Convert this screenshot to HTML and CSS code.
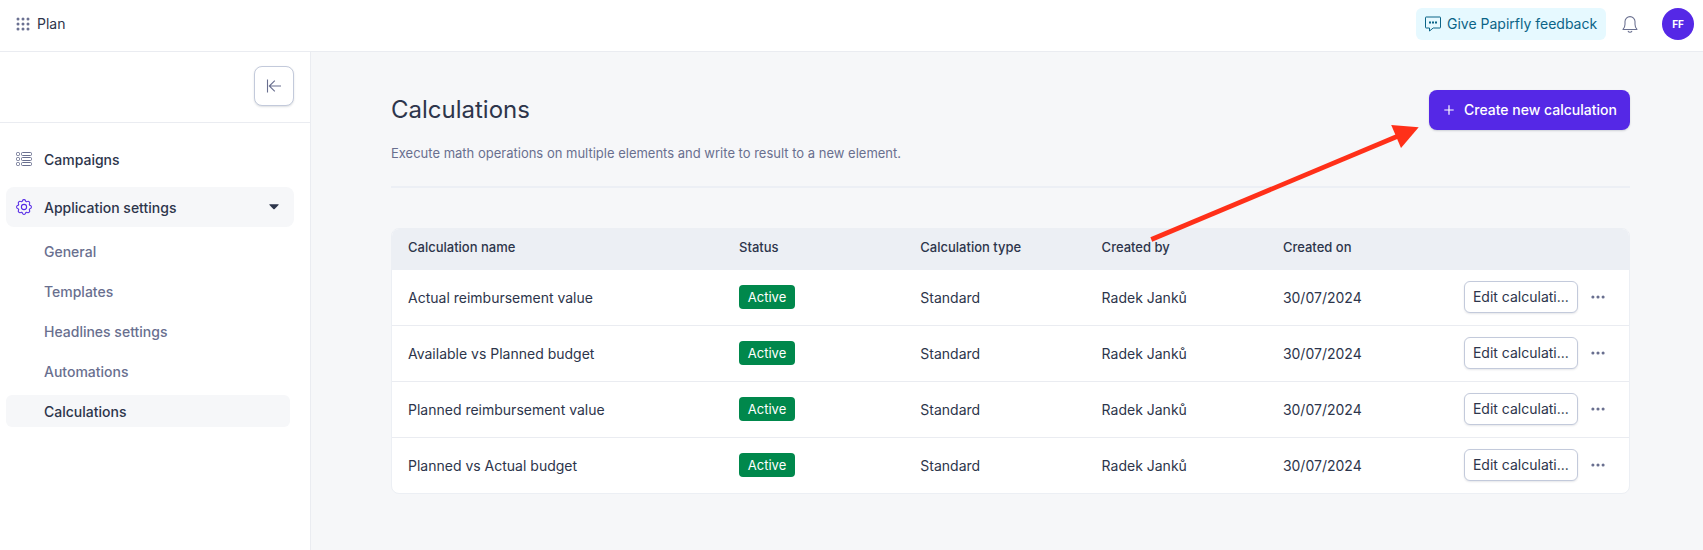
FILE: index.html
```html
<!DOCTYPE html>
<html lang="en">
<head>
<meta charset="utf-8">
<title>Plan – Calculations</title>
<link rel="stylesheet" href="styles.css">
</head>
<body>
<svg class="defs" width="0" height="0" aria-hidden="true">
  <symbol id="dots" viewBox="0 0 14 4"><circle cx="1.9" cy="2" r="1.55"/><circle cx="7" cy="2" r="1.55"/><circle cx="12.1" cy="2" r="1.55"/></symbol>
</svg>
<header class="topbar">
  <div class="brand">
    <svg class="grid-icon" width="14" height="14" viewBox="0 0 14 14"><circle cx="2" cy="2" r="1.5"/><circle cx="7" cy="2" r="1.5"/><circle cx="12" cy="2" r="1.5"/><circle cx="2" cy="7" r="1.5"/><circle cx="7" cy="7" r="1.5"/><circle cx="12" cy="7" r="1.5"/><circle cx="2" cy="12" r="1.5"/><circle cx="7" cy="12" r="1.5"/><circle cx="12" cy="12" r="1.5"/></svg>
    <span>Plan</span>
  </div>
  <div class="tools">
    <button class="feedback">
      <svg width="16" height="16" viewBox="0 0 16 16" fill="none" stroke="currentColor"><path d="M1 1h14a.5.5 0 0 1 .5.5v10a.5.5 0 0 1-.5.5H8.200L4.500 15v-3H1a.5.5 0 0 1-.5-.5v-10A.5.5 0 0 1 1 1z"/><path d="M4 6.500h2M7 6.500h2M10 6.500h2" stroke-width="2"/></svg>
      <span>Give Papirfly feedback</span>
    </button>
    <svg class="bell" width="16" height="17" viewBox="0 0 16 17" fill="none" stroke="currentColor" stroke-width="1.05" stroke-linejoin="round"><path d="M1 13.4c1.2-1.3 2-2.8 2-5.2V5.6a5 5 0 0 1 10 0v2.600c0 2.400.8 3.900 2 5.200z"/><path d="M6.200 15.200a1.900 1.500 0 0 0 3.600 0" stroke-linecap="round"/></svg>
    <span class="avatar">FF</span>
  </div>
</header>
<div class="body">
  <aside class="sidebar">
    <div class="side-head">
      <button class="collapse" aria-label="Collapse"><svg width="16" height="14" viewBox="0 0 16 14" fill="none" stroke="currentColor" stroke-width="1.1"><path d="M1.500.5v13M15 7H3.500M8.800 1.700 3.300 7l5.500 5.300"/></svg></button>
    </div>
    <nav class="nav">
      <a class="nav-item">
        <svg width="16" height="14" viewBox="0 0 16 14" fill="none" stroke="currentColor"><rect x=".5" y=".5" width="3" height="3" rx="1"/><rect x="5.500" y=".5" width="10" height="3" rx="1"/><rect x=".5" y="5.500" width="3" height="3" rx="1"/><rect x="5.500" y="5.500" width="10" height="3" rx="1"/><rect x=".5" y="10.500" width="3" height="3" rx="1"/><rect x="5.500" y="10.500" width="10" height="3" rx="1"/></svg>
        <span>Campaigns</span>
      </a>
      <a class="nav-item open">
        <svg class="gear" width="16" height="16" viewBox="0 0 16 16" fill="none" stroke="currentColor" stroke-width="1.100" stroke-linejoin="round"><path d="M6.520 1.540C6.900.3 9.100.3 9.480 1.540C9.750 2.700 10.600 3 11.520 2.380C12.700 1.800 14.200 3.300 13.620 4.480C13 5.400 13.300 6.250 14.460 6.520C15.700 6.900 15.700 9.100 14.460 9.480C13.300 9.750 13 10.600 13.620 11.520C14.200 12.700 12.700 14.200 11.520 13.620C10.600 13 9.750 13.300 9.480 14.460C9.100 15.700 6.900 15.700 6.520 14.460C6.250 13.300 5.400 13 4.480 13.620C3.300 14.200 1.800 12.700 2.380 11.520C3 10.600 2.700 9.750 1.540 9.480C.3 9.100.3 6.900 1.540 6.520C2.700 6.250 3 5.400 2.380 4.480C1.800 3.300 3.300 1.800 4.480 2.380C5.400 3 6.250 2.700 6.520 1.540z"/><circle cx="8" cy="8" r="2.600"/></svg>
        <span>Application settings</span>
        <svg class="caret" width="10" height="6" viewBox="0 0 10 6"><path d="M.8.300h8.400q.9 0 .3.700L5.700 4.900q-.7.600-1.400 0L.500 1Q-.1.300.8.300z"/></svg>
      </a>
      <div class="subnav">
        <a>General</a>
        <a>Templates</a>
        <a>Headlines settings</a>
        <a>Automations</a>
        <a class="current">Calculations</a>
      </div>
    </nav>
  </aside>
  <main class="main">
    <div class="title-row">
      <h1>Calculations</h1>
      <button class="create"><svg width="10" height="10" viewBox="0 0 10 10" stroke="currentColor" stroke-width="1.200"><path d="M5 .3v9.400M.3 5h9.400"/></svg><span>Create new calculation</span></button>
    </div>
    <p class="desc">Execute math operations on multiple elements and write to result to a new element.</p>
    <section class="table">
      <div class="row head"><span>Calculation name</span><span>Status</span><span>Calculation type</span><span>Created by</span><span>Created on</span><span></span></div>
      <div class="row"><span>Actual reimbursement value</span><span class="status"><b class="badge">Active</b></span><span>Standard</span><span>Radek Janků</span><span>30/07/2024</span><span class="actions"><button class="edit">Edit calculati...</button><svg class="more" width="14" height="4"><use href="#dots"/></svg></span></div>
      <div class="row"><span>Available vs Planned budget</span><span class="status"><b class="badge">Active</b></span><span>Standard</span><span>Radek Janků</span><span>30/07/2024</span><span class="actions"><button class="edit">Edit calculati...</button><svg class="more" width="14" height="4"><use href="#dots"/></svg></span></div>
      <div class="row"><span>Planned reimbursement value</span><span class="status"><b class="badge">Active</b></span><span>Standard</span><span>Radek Janků</span><span>30/07/2024</span><span class="actions"><button class="edit">Edit calculati...</button><svg class="more" width="14" height="4"><use href="#dots"/></svg></span></div>
      <div class="row"><span>Planned vs Actual budget</span><span class="status"><b class="badge">Active</b></span><span>Standard</span><span>Radek Janků</span><span>30/07/2024</span><span class="actions"><button class="edit">Edit calculati...</button><svg class="more" width="14" height="4"><use href="#dots"/></svg></span></div>
    </section>
  </main>
</div>
<svg class="arrow" width="270" height="120" viewBox="1150 123 270 120"><path d="M1151.300 239.500 1400 135.300" stroke="#ff3019" stroke-width="4.800"/><path d="M1418.700 127.200 1391.200 125 1401 148z" fill="#ff3019"/></svg>
</body>
</html>
```

FILE: styles.css
```css
* { box-sizing: border-box; }
body {
  margin: 0;
  height: 550px;
  display: flex;
  flex-direction: column;
  overflow: hidden;
  background: #f6f7f9;
  color: #2d354b;
  font: 400 14px/20px Inter, sans-serif;
}
button { font: inherit; letter-spacing: inherit; color: inherit; border: 0; margin: 0; padding: 0; }
svg { display: block; flex: none; }
.defs { position: absolute; }

.topbar {
  flex: none;
  height: 52px;
  display: flex;
  justify-content: space-between;
  padding: 0 9px 4px 16px;
  background: #fff;
  border-bottom: 1px solid #eaecf1;
}
.brand { display: flex; align-items: center; gap: 7px; }
.grid-icon { fill: #6b7192; }
.tools { display: flex; align-items: center; padding-top: 1px; }
.feedback {
  display: flex;
  align-items: center;
  gap: 6px;
  width: 190px;
  height: 32px;
  padding-left: 9px;
  border-radius: 6px;
  background: #e6f9ff;
  color: #0b6487;
  white-space: nowrap;
}
.bell { margin: 0 24px 0 16px; color: #696f8f; }
.avatar {
  width: 32px;
  height: 32px;
  border-radius: 50%;
  background: #5528e6;
  color: #fff;
  font-size: 10px;
  font-weight: 700;
  line-height: 33px;
  text-align: center;
}

.body { flex: 1; display: flex; }
.sidebar { width: 311px; flex: none; background: #fff; border-right: 1px solid #eaecf1; }
.side-head {
  height: 71px;
  display: flex;
  justify-content: flex-end;
  padding: 14px 16px 0;
  border-bottom: 1px solid #eaecf1;
}
.collapse {
  width: 40px;
  height: 40px;
  display: flex;
  align-items: center;
  justify-content: center;
  padding-bottom: 1px;
  border: 1px solid #c3cadb;
  border-radius: 8px;
  background: #fff;
  color: #696f8f;
  box-shadow: 0 1px 2px rgba(45, 53, 75, .16);
}
.nav { padding: 16px 16px 0 6px; display: flex; flex-direction: column; gap: 8px; }
.nav-item {
  height: 40px;
  display: flex;
  align-items: center;
  gap: 12px;
  padding: 0 15px 0 10px;
  border-radius: 8px;
  font-weight: 500;
  color: #2d354b;
}
.nav-item > svg { color: #696f8f; }
.nav-item > span { padding-top: 1px; }
.nav-item.open { background: #f6f7f9; }
.nav-item .gear { color: #5528e6; }
.nav-item .caret { margin-left: auto; fill: #2d354b; }
.subnav { display: flex; flex-direction: column; gap: 8px; width: 284px; }
.subnav a {
  height: 32px;
  padding-left: 38px;
  border-radius: 6px;
  line-height: 33px;
  font-weight: 500;
  color: #696f8f;
}
.subnav .current { background: #f6f7f9; color: #2d354b; }

.main { flex: 1; padding: 38px 73px 0 80px; }
.title-row { height: 40px; display: flex; justify-content: space-between; align-items: center; }
h1 { margin: 0; font-size: 24px; font-weight: 400; line-height: 32px; }
.create {
  display: flex;
  align-items: center;
  gap: 10px;
  width: 201px;
  height: 40px;
  padding-left: 15px;
  border-radius: 8px;
  background: #5528e6;
  color: #fff;
  font-weight: 500;
  white-space: nowrap;
  box-shadow: 0 1px 2px rgba(45, 53, 75, .2);
}
.desc {
  margin: 0 0 40px;
  height: 58px;
  padding-top: 13px;
  border-bottom: 2px solid #eceff5;
  font-size: 13px;
  color: #696f8f;
}
.table {
  height: 266px;
  border: 1px solid #eceff4;
  border-radius: 8px;
  overflow: hidden;
  background: #fff;
}
.row {
  height: 56px;
  display: grid;
  grid-template-columns: 331px 181.300px 181.300px 181.300px 181px 1fr;
  align-items: center;
  padding: 0 0 1px 16px;
  border-bottom: 1px solid #eaecf1;
}
.row > span { padding-top: 2px; white-space: nowrap; }
.row > .status, .row > .actions { padding-top: 0; }
.row:last-child { height: 55px; border-bottom: 0; }
.row.head {
  height: 41px;
  border: 0;
  background: #eceff4;
  font-size: 13px;
  font-weight: 500;
}
.row.head > span { padding: 0 0 4px; }
.status { display: flex; }
.badge {
  width: 56px;
  height: 24px;
  border-radius: 4px;
  background: #00884c;
  color: #fff;
  font-size: 13px;
  font-weight: 400;
  line-height: 25px;
  text-align: center;
}
.actions { display: flex; align-items: center; gap: 13px; }
.edit {
  width: 114px;
  height: 32px;
  border: 1px solid #c3cadb;
  border-radius: 6px;
  background: #fff;
  white-space: nowrap;
  box-shadow: 0 1px 2px rgba(45, 53, 75, .12);
}
.more { fill: #696f8f; }

.arrow { position: absolute; left: 1150px; top: 123px; }
```
